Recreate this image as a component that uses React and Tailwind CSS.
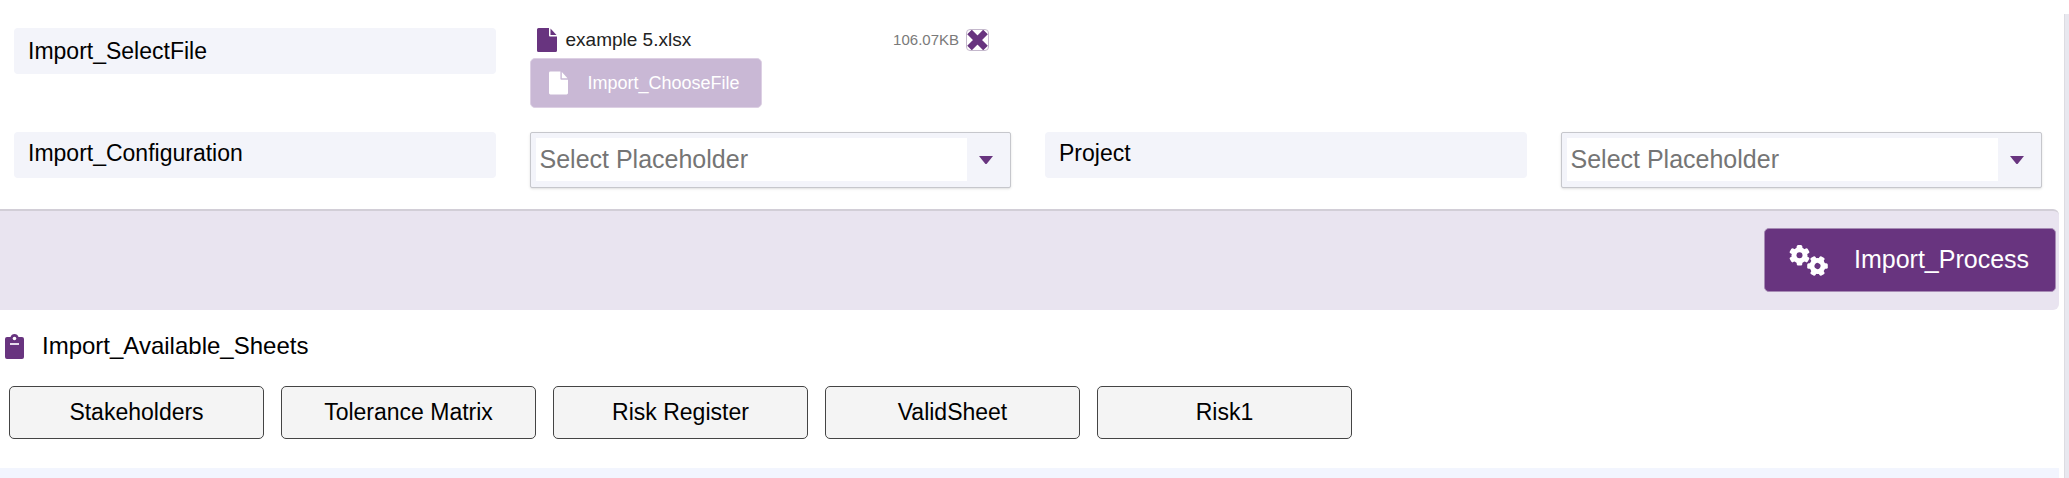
import React from "react";

const sheets = [
  "Stakeholders",
  "Tolerance Matrix",
  "Risk Register",
  "ValidSheet",
  "Risk1",
];

function FileIcon({ className }) {
  return (
    <svg className={className} viewBox="0 0 20 24" aria-hidden="true">
      <path
        fill="currentColor"
        d="M1.500 0H12v7.500a1 1 0 0 0 1 1h7v14a1.500 1.500 0 0 1-1.500 1.500h-17a1.500 1.500 0 0 1-1.500-1.500v-21a1.500 1.500 0 0 1 1.500-1.500z"
      />
      <path fill="currentColor" d="M13.500 0.500L19.500 7H13.500z" />
    </svg>
  );
}

function ClipboardIcon() {
  return (
    <svg className="w-[19px] h-[25px]" viewBox="0 0 19 25" aria-hidden="true">
      <path
        fill="#68347f"
        d="M2 3h3.500a4.200 4.200 0 0 1 8 0H17a2 2 0 0 1 2 2v18a2 2 0 0 1-2 2H2a2 2 0 0 1-2-2V5a2 2 0 0 1 2-2z"
      />
      <circle cx="9.500" cy="4.500" r="1.800" fill="#fff" />
      <path stroke="#e6dcec" strokeWidth="2" d="M5 10h9" />
    </svg>
  );
}

function Gear({ x, y, turn }) {
  return (
    <g transform={`translate(${x} ${y}) rotate(${turn})`}>
      {[0, 60, 120].map((angle) => (
        <rect
          key={angle}
          x="-2.800"
          y="-10.300"
          width="5.600"
          height="20.600"
          rx="1.500"
          transform={`rotate(${angle})`}
        />
      ))}
      <circle r="8" />
      <circle r="3" fill="#68347f" />
    </g>
  );
}

function GearsIcon() {
  return (
    <svg
      className="w-[39px] h-[31px]"
      viewBox="0 0 39 31"
      fill="#fff"
      aria-hidden="true"
    >
      <Gear x={10.5} y={10.3} turn={0} />
      <Gear x={28.5} y={21} turn={30} />
    </svg>
  );
}

function Label({ htmlFor, className, children }) {
  return (
    <label
      htmlFor={htmlFor}
      className={`block h-[46px] rounded-sm bg-[#f3f4fa] px-[14px] text-[23px] ${className}`}
    >
      {children}
    </label>
  );
}

function Combo({ id }) {
  return (
    <div className="flex h-[56px] rounded-xs border border-[#c6c7cc] bg-[#f3f4fa] py-[5px] pl-[5px] shadow-sm">
      <input
        id={id}
        type="text"
        placeholder="Select Placeholder"
        className="h-[43px] min-w-0 flex-1 bg-white px-1 text-[25px] placeholder:text-[#757575] outline-none"
      />
      <button
        type="button"
        aria-label="Open list"
        className="flex w-[43px] items-center justify-center pr-[6px]"
      >
        <svg className="w-[14px] h-[8px]" viewBox="0 0 14 8">
          <path fill="#68347f" d="M0 0H14L8 7.500Q7 8.500 6 7.500Z" />
        </svg>
      </button>
    </div>
  );
}

export default function App() {
  return (
    <div className="flex min-h-screen bg-white font-['Liberation_Sans',Arial,sans-serif] text-black">
      <main className="flex min-w-0 flex-1 flex-col pr-[5px]">
        <div className="grid grid-cols-4 gap-x-[34px] gap-y-6 pt-7 pb-[21px] pl-[14px] pr-[17px]">
          <Label htmlFor="file" className="leading-[47px]">
            Import_SelectFile
          </Label>
          <div>
            <div className="flex h-[24px] items-center pl-[7px] pr-[22px]">
              <FileIcon className="w-[20px] h-[24px] text-[#68347f]" />
              <span className="ml-[9px] flex-1 text-[19px] leading-6 text-[#222]">
                example 5.xlsx
              </span>
              <span className="text-[15px] text-[#7a7a7a]">106.07KB</span>
              <button
                type="button"
                aria-label="Remove file"
                className="ml-[7px] flex h-[22px] w-[23px] items-center justify-center rounded-sm border border-[#c4b8cc]"
              >
                <svg className="w-[21px] h-[20px] shrink-0" viewBox="0 0 21 20">
                  <path
                    stroke="#68347f"
                    strokeWidth="6.500"
                    d="M2.500 2L18.500 18M18.500 2L2.500 18"
                  />
                </svg>
              </button>
            </div>
            <button
              id="file"
              type="button"
              disabled
              className="mt-[6px] flex h-[50px] w-[232px] items-center rounded-[5px] border border-[#ddd0e4] bg-[#c9b8d5] pl-[18px] text-[18px] text-white"
            >
              <FileIcon className="mr-[20px] w-[19px] h-[24px]" />
              Import_ChooseFile
            </button>
          </div>
          <div className="col-span-2" />
          <Label htmlFor="configuration" className="leading-[43px]">
            Import_Configuration
          </Label>
          <Combo id="configuration" />
          <Label htmlFor="project" className="leading-[43px]">
            Project
          </Label>
          <Combo id="project" />
        </div>

        <div className="flex h-[101px] items-start justify-end rounded-r-md border-t-2 border-[#d2ced7] bg-[#e9e4f0] pt-[17px] pr-[3px]">
          <button
            type="button"
            className="flex h-[64px] w-[292px] items-center rounded-[5px] border border-[#a78bb5] bg-[#68347f] pl-6 text-[25px] text-white"
          >
            <GearsIcon />
            <span className="ml-[26px]">Import_Process</span>
          </button>
        </div>

        <h2 className="mt-5 flex items-center gap-[18px] pl-[5px] text-[24px] leading-[32px]">
          <ClipboardIcon />
          Import_Available_Sheets
        </h2>

        <div className="mt-6 mb-[29px] flex flex-wrap gap-[17px] pl-[9px]">
          {sheets.map((sheet) => (
            <button
              key={sheet}
              type="button"
              className="h-[53px] w-[255px] rounded-[5px] border border-[#444] bg-[#f4f4f4] text-[23px]"
            >
              {sheet}
            </button>
          ))}
        </div>

        <div className="min-h-[10px] flex-1 bg-[#f2f5fe]" />
      </main>
      <div className="mt-[14px] w-[5px] border-l border-[#dcdce2] bg-[#e8e8ef]" />
    </div>
  );
}
